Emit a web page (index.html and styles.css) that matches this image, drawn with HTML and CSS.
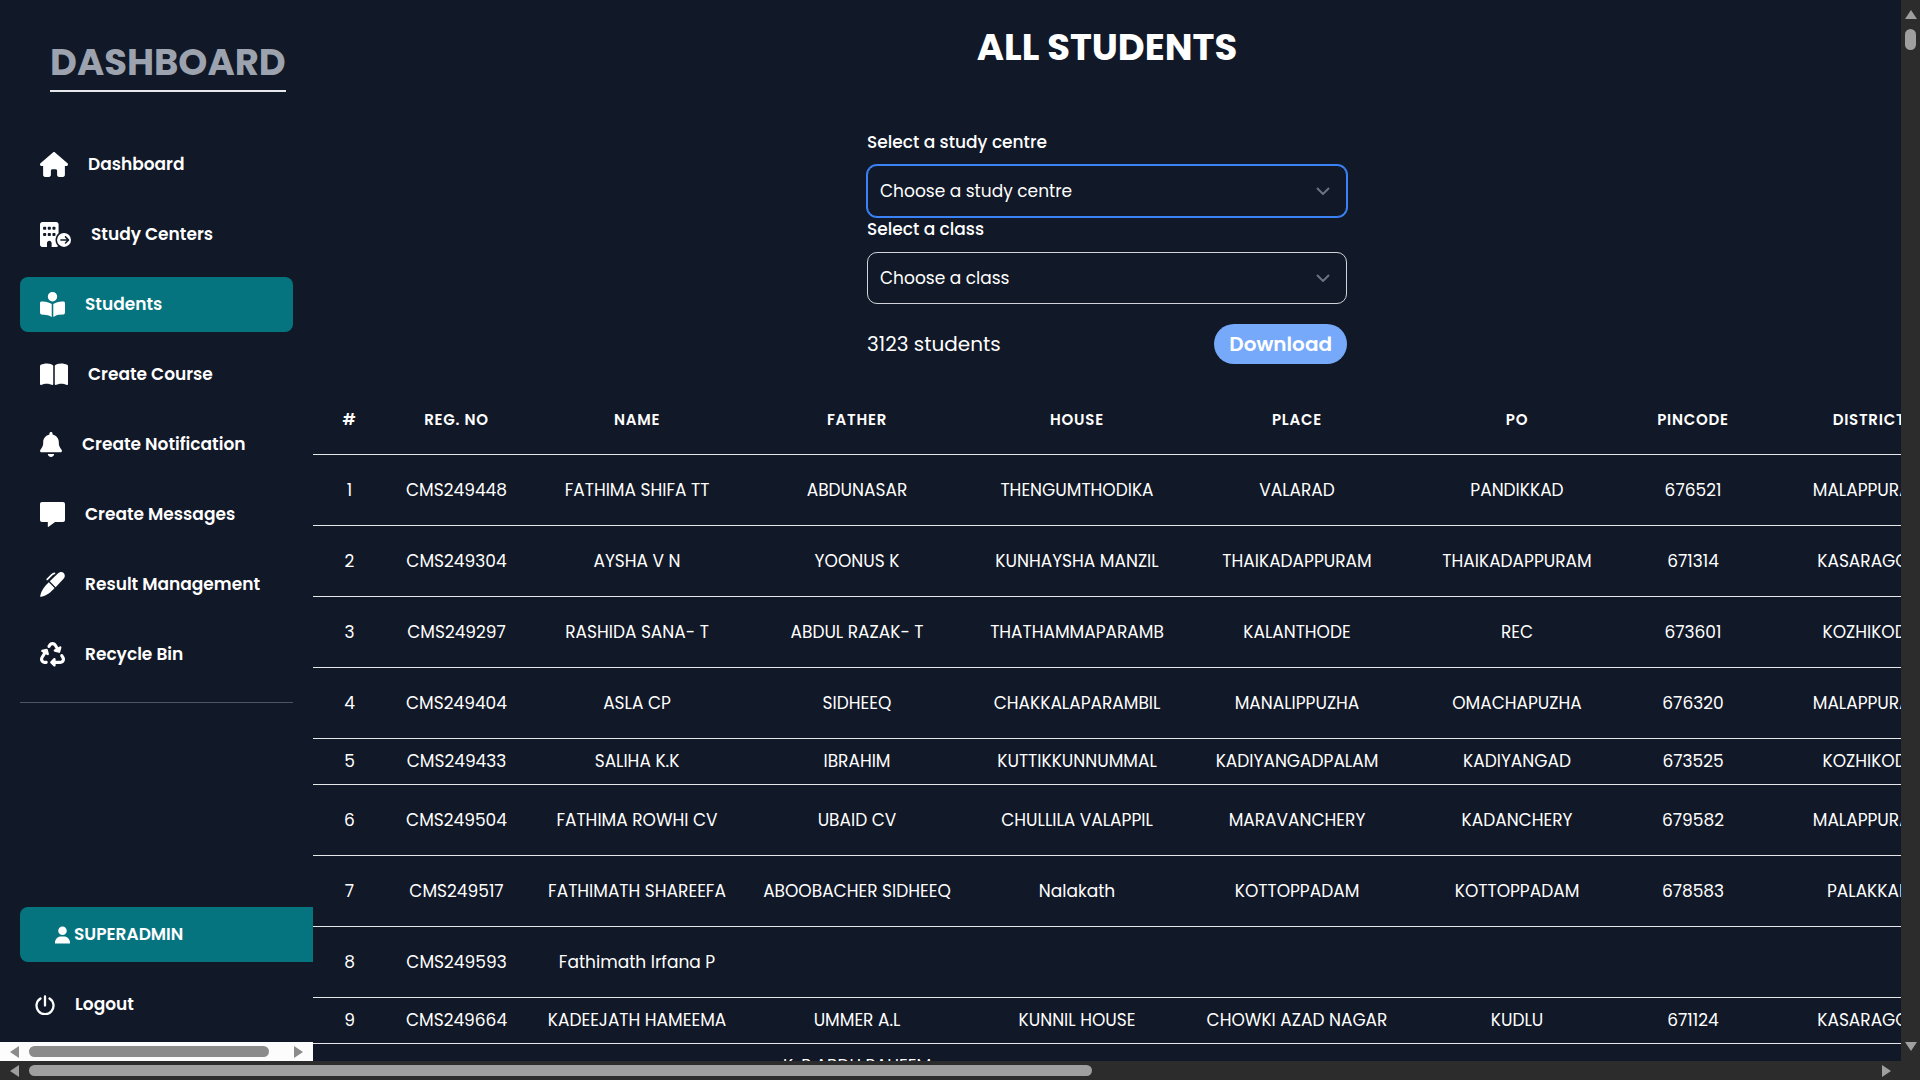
FILE: index.html
```
<!DOCTYPE html>
<html lang="en">
<head>
  <meta charset="UTF-8" />
  <meta name="viewport" content="width=device-width, initial-scale=1.0"/>
  <title>All Students</title>
  <link rel="stylesheet" href="styles.css">
</head>
<body>

  <div class="window">
    <div class="page">
      <aside class="sidebar">
        <div class="sidebar-body">
          <h2 class="brand">DASHBOARD</h2>
          <nav class="menu">
            <a href="#">
              <svg width="28" height="25" viewBox="0 0 576 512"><path d="M575.8 255.5c0 18-15 32.1-32 32.1h-32l.7 160.2c0 2.7-.2 5.4-.5 8.1V472c0 22.1-17.9 40-40 40H456c-1.1 0-2.2 0-3.3-.1c-1.4 .1-2.8 .1-4.2 .1H416 392c-22.1 0-40-17.9-40-40V448 384c0-17.7-14.3-32-32-32H256c-17.7 0-32 14.3-32 32v64 24c0 22.1-17.9 40-40 40H160 128.1c-1.5 0-3-.1-4.5-.2c-1.2 .1-2.4 .2-3.6 .2H104c-22.1 0-40-17.9-40-40V360c0-.9 0-1.9 .1-2.8V287.6H32c-18 0-32-14-32-32.1c0-9 3-17 10-24L266.4 8c7-7 15-8 22-8s15 2 21 7L564.8 231.5c8 7 12 15 11 24z"/></svg>
              Dashboard
            </a>
            <a href="#">
              <svg width="31" height="25" viewBox="0 0 640 512"><path fill-rule="evenodd" d="M48 0H336c26.5 0 48 21.5 48 48V232c-39 32-64 81-64 136c0 49 20 94 53 126C364 505 351 512 336 512H240V432c0-26.5-21.5-48-48-48s-48 21.5-48 48v80H48c-26.5 0-48-21.5-48-48V48C0 21.5 21.500 0 48 0zM80 224c-9 0-16 7-16 16v32c0 9 7 16 16 16h32c9 0 16-7 16-16V240c0-9-7-16-16-16H80zm96 0c-9 0-16 7-16 16v32c0 9 7 16 16 16h32c9 0 16-7 16-16V240c0-9-7-16-16-16H176zm96 0c-9 0-16 7-16 16v32c0 9 7 16 16 16h32c9 0 16-7 16-16V240c0-9-7-16-16-16H272zM80 96c-9 0-16 7-16 16v32c0 9 7 16 16 16h32c9 0 16-7 16-16V112c0-9-7-16-16-16H80zm96 0c-9 0-16 7-16 16v32c0 9 7 16 16 16h32c9 0 16-7 16-16V112c0-9-7-16-16-16H176zm96 0c-9 0-16 7-16 16v32c0 9 7 16 16 16h32c9 0 16-7 16-16V112c0-9-7-16-16-16H272zM496 224a144 144 0 1 1 0 288 144 144 0 1 1 0-288zM515 293c-6 6-6 16 0 23l36 36H432c-9 0-16 7-16 16s7 16 16 16H551l-36 36c-6 7-6 17 0 23s16 6 22 0l64-64c6-6 6-16 0-22l-64-64c-6-6-16-6-22 0z"/></svg>
              Study Centers
            </a>
            <a href="#" class="active">
              <svg width="25" height="25" viewBox="0 0 512 512"><path d="M160 96a96 96 0 1 1 192 0A96 96 0 1 1 160 96zm80 152V512l-48.4-24.2c-20.9-10.4-43.5-17-66.8-19.3l-96-9.6C12.5 457.2 0 443.5 0 427V224c0-17.7 14.3-32 32-32H62.3c63.6 0 125.6 19.6 177.7 56zm32 264V248c52.1-36.4 114.1-56 177.7-56H480c17.7 0 32 14.3 32 32V427c0 16.4-12.5 30.2-28.8 31.8l-96 9.6c-23.2 2.3-45.9 8.9-66.8 19.3L272 512z"/></svg>
              Students
            </a>
            <a href="#">
              <svg width="28" height="25" viewBox="0 0 576 512"><path d="M249.6 471.5c10.8 3.8 22.4-4.1 22.4-15.5V78.6c0-4.2-1.6-8.4-5-11C247.4 52 202.4 32 144 32C93.5 32 46.3 45.3 18.1 56.1C6.8 60.5 0 71.7 0 83.8V454.1c0 11.9 12.8 20.2 24.1 16.5C55.6 460.1 105.5 448 144 448c33.9 0 79 14 105.6 23.5zm76.8 0C353 462 398.1 448 432 448c38.5 0 88.4 12.1 119.9 22.6c11.3 3.8 24.1-4.6 24.1-16.5V83.8c0-12.1-6.8-23.3-18.1-27.6C529.7 45.3 482.5 32 432 32c-58.4 0-103.4 20-123 35.6c-3.3 2.6-5 6.8-5 11V456c0 11.4 11.7 19.3 22.4 15.5z"/></svg>
              Create Course
            </a>
            <a href="#">
              <svg width="22" height="25" viewBox="0 0 448 512"><path d="M224 0c-17.7 0-32 14.3-32 32V51.2C119 66 64 130.6 64 208v18.8c0 47-17.3 92.4-48.5 127.6l-7.4 8.3c-8.4 9.4-10.4 22.9-5.3 34.4S19.4 416 32 416H416c12.6 0 24-7.4 29.2-18.9s3.1-25-5.3-34.4l-7.4-8.3C401.3 319.2 384 273.9 384 226.8V208c0-77.4-55-142-128-156.8V32c0-17.7-14.3-32-32-32zm45.3 493.3c12-12 18.7-28.3 18.7-45.3H224 160c0 17 6.7 33.3 18.7 45.3s28.3 18.7 45.3 18.7s33.3-6.7 45.3-18.7z"/></svg>
              Create Notification
            </a>
            <a href="#">
              <svg width="25" height="25" viewBox="0 0 512 512"><path d="M40 0C18 0 0 18 0 40V368c0 22 18 40 40 40H160v92c0 10 8 15 16 9L309 408H472c22 0 40-18 40-40V40c0-22-18-40-40-40H40z"/></svg>
              Create Messages
            </a>
            <a href="#">
              <svg width="25" height="25" viewBox="0 0 512 512"><path d="M200 190L360 35c40-40 95-45 125-15s33 85-7 125L320 310zM180 212L298 330C230 410 140 485 25 508C8 512 0 505 4 487C25 385 95 295 180 212z"/><path class="clip" d="M148 150L235 62q25-25 60-32"/></svg>
              Result Management
            </a>
            <a href="#">
              <svg width="25" height="25" viewBox="0 0 512 512"><path d="M174.7 45.1C192.2 17 223 0 256 0s63.8 17 81.3 45.1l38.6 61.7 27-15.6c8.4-4.9 18.9-4.2 26.6 1.7s11.1 15.9 8.6 25.3l-23.4 87.4c-3.4 12.8-16.6 20.4-29.4 17l-87.4-23.4c-9.4-2.5-16.3-10.4-17.6-20s3.4-19.1 11.8-23.9l28.4-16.4L283 79c-5.8-9.3-16-15-27-15s-21.2 5.7-27 15l-17.5 28c-9.2 14.8-28.6 19.5-43.6 10.5c-15.3-9.2-20.2-29.2-10.7-44.4l17.5-28zM429.5 251.9c15-9 34.4-4.3 43.6 10.5l24.4 39.1c9.4 15.1 14.4 32.4 14.6 50.2c.3 53.1-42.7 96.4-95.8 96.4L320 448v32c0 9.7-5.8 18.5-14.8 22.2s-19.3 1.7-26.2-5.2l-64-64c-9.4-9.4-9.4-24.6 0-33.9l64-64c6.9-6.9 17.2-8.9 26.2-5.2s14.8 12.5 14.8 22.2v32l96.2 0c17.6 0 31.9-14.4 31.8-32c0-5.9-1.7-11.7-4.8-16.7l-24.4-39.1c-9.5-15.2-4.7-35.2 10.7-44.4zm-364.6-31L36 204.2c-8.4-4.9-13.1-14.3-11.8-23.9s8.2-17.5 17.6-20l87.4-23.4c12.8-3.4 26 4.2 29.4 17L182 241.2c2.5 9.4-.9 19.3-8.6 25.3s-18.2 6.6-26.6 1.7l-26.5-15.3L68.8 335.3c-3.1 5-4.8 10.8-4.8 16.7c-.1 17.6 14.2 32 31.8 32l32.2 0c17.7 0 32 14.3 32 32s-14.3 32-32 32l-32.2 0C42.7 448-.3 404.8 0 351.6c.1-17.8 5.1-35.1 14.6-50.2l50.3-80.5z"/></svg>
              Recycle Bin
            </a>
          </nav>
          <div class="account">
            <a href="#" class="user">
              <svg width="15" height="18" viewBox="0 0 448 512"><path d="M224 256A128 128 0 1 0 224 0a128 128 0 1 0 0 256zm-46 48C80 304 0 384 0 482V512H448V482C448 384 368 304 270 304H178z"/></svg>
              SUPERADMIN
            </a>
            <a href="#" class="logout">
              <svg class="power" width="20" height="20" viewBox="0 0 20 20"><path d="M5.5 3.5A8.500 8.500 0 1 0 14.5 3.5M10 1.500V10.500"/></svg>
              Logout
            </a>
          </div>
        </div>
        <div class="bar bar-light" aria-hidden="true">
          <svg width="9" height="12" viewBox="0 0 9 12"><path d="M9 0V12L0 6z"/></svg>
          <div class="track"><div class="thumb" style="width: 94%"></div></div>
          <svg width="9" height="12" viewBox="0 0 9 12"><path d="M0 0V12L9 6z"/></svg>
        </div>
      </aside>

      <main class="content">
        <h1>ALL STUDENTS</h1>
        <form class="filters">
          <label for="centre">Select a study centre</label>
          <div class="select-box focused">
            <select id="centre"><option>Choose a study centre</option></select>
            <svg width="14" height="8" viewBox="0 0 14 8"><path d="M1 1l6 6 6-6"/></svg>
          </div>
          <label for="class">Select a class</label>
          <div class="select-box">
            <select id="class"><option>Choose a class</option></select>
            <svg width="14" height="8" viewBox="0 0 14 8"><path d="M1 1l6 6 6-6"/></svg>
          </div>
          <div class="summary">
            <p>3123 students</p>
            <button type="button">Download</button>
          </div>
        </form>

        <div class="table-wrap">
          <table>
            <colgroup>
              <col class="c-num"><col class="c-reg"><col class="c-text"><col class="c-text"><col class="c-text">
              <col class="c-text"><col class="c-text"><col class="c-pin"><col class="c-text">
            </colgroup>
            <thead>
              <tr><th>#</th><th>REG. NO</th><th>NAME</th><th>FATHER</th><th>HOUSE</th><th>PLACE</th><th>PO</th><th>PINCODE</th><th>DISTRICT</th></tr>
            </thead>
            <tbody>
              <tr><td>1</td><td>CMS249448</td><td>FATHIMA SHIFA TT</td><td>ABDUNASAR</td><td>THENGUMTHODIKA</td><td>VALARAD</td><td>PANDIKKAD</td><td>676521</td><td>MALAPPURAM</td></tr>
              <tr><td>2</td><td>CMS249304</td><td>AYSHA V N</td><td>YOONUS K</td><td>KUNHAYSHA MANZIL</td><td>THAIKADAPPURAM</td><td>THAIKADAPPURAM</td><td>671314</td><td>KASARAGOD</td></tr>
              <tr><td>3</td><td>CMS249297</td><td>RASHIDA SANA- T</td><td>ABDUL RAZAK- T</td><td>THATHAMMAPARAMB</td><td>KALANTHODE</td><td>REC</td><td>673601</td><td>KOZHIKODE</td></tr>
              <tr><td>4</td><td>CMS249404</td><td>ASLA CP</td><td>SIDHEEQ</td><td>CHAKKALAPARAMBIL</td><td>MANALIPPUZHA</td><td>OMACHAPUZHA</td><td>676320</td><td>MALAPPURAM</td></tr>
              <tr class="short"><td>5</td><td>CMS249433</td><td>SALIHA K.K</td><td>IBRAHIM</td><td>KUTTIKKUNNUMMAL</td><td>KADIYANGADPALAM</td><td>KADIYANGAD</td><td>673525</td><td>KOZHIKODE</td></tr>
              <tr><td>6</td><td>CMS249504</td><td>FATHIMA ROWHI CV</td><td>UBAID CV</td><td>CHULLILA VALAPPIL</td><td>MARAVANCHERY</td><td>KADANCHERY</td><td>679582</td><td>MALAPPURAM</td></tr>
              <tr><td>7</td><td>CMS249517</td><td>FATHIMATH SHAREEFA</td><td>ABOOBACHER SIDHEEQ</td><td>Nalakath</td><td>KOTTOPPADAM</td><td>KOTTOPPADAM</td><td>678583</td><td>PALAKKAD</td></tr>
              <tr><td>8</td><td>CMS249593</td><td>Fathimath Irfana P</td><td></td><td></td><td></td><td></td><td></td><td></td></tr>
              <tr class="short"><td>9</td><td>CMS249664</td><td>KADEEJATH HAMEEMA</td><td>UMMER A.L</td><td>KUNNIL HOUSE</td><td>CHOWKI AZAD NAGAR</td><td>KUDLU</td><td>671124</td><td>KASARAGOD</td></tr>
              <tr><td></td><td></td><td></td><td>K. P ABDU RAHEEM<br>&nbsp;</td><td></td><td></td><td></td><td></td><td></td></tr>
            </tbody>
          </table>
        </div>
      </main>
    </div>

    <div class="bar bar-vertical" aria-hidden="true">
      <svg width="12" height="9" viewBox="0 0 12 9"><path d="M0 9H12L6 0z"/></svg>
      <div class="track"><div class="thumb"></div></div>
      <svg width="12" height="9" viewBox="0 0 12 9"><path d="M0 0H12L6 9z"/></svg>
    </div>
    <div class="bar" aria-hidden="true">
      <svg width="9" height="12" viewBox="0 0 9 12"><path d="M9 0V12L0 6z"/></svg>
      <div class="track"><div class="thumb" style="width: 57.7%"></div></div>
      <svg width="9" height="12" viewBox="0 0 9 12"><path d="M0 0V12L9 6z"/></svg>
    </div>
    <div class="corner"></div>
  </div>

</body>
</html>
```
FILE: styles.css
```
* {
  box-sizing: border-box;
}
body {
  margin: 0;
  font-family: Poppins, Inter, sans-serif;
  font-size: 17px;
  line-height: 25px;
  background-color: #111827;
  color: white;
}
a {
  color: inherit;
  text-decoration: none;
}
svg {
  display: block;
  flex: none;
  fill: currentColor;
}

/* window frame with its scroll bars */
.window {
  display: grid;
  grid-template-columns: minmax(0, 1fr) 19px;
  grid-template-rows: minmax(0, 1fr) 19px;
  height: 100vh;
}
.page {
  display: flex;
  overflow: hidden;
}
.bar {
  display: flex;
  align-items: center;
  gap: 10px;
  height: 19px;
  padding: 0 10px;
  background-color: #2c2c2c;
  color: #9f9f9f;
}
.track {
  flex: 1;
}
.thumb {
  height: 11px;
  border-radius: 6px;
  background-color: #9f9f9f;
}
.bar-light {
  background-color: #fcfcfc;
  color: #8b8b8b;
}
.bar-light .thumb {
  background-color: #8b8b8b;
}
.bar-vertical {
  flex-direction: column;
  width: 19px;
  height: auto;
  padding: 10px 0;
}
.bar-vertical .thumb {
  width: 11px;
  height: 21px;
}
.corner {
  background-color: #2c2c2c;
}

/* sidebar */
.sidebar {
  display: flex;
  flex-direction: column;
  flex: none;
  width: 313px;
}
.sidebar-body {
  flex: 1;
  display: flex;
  flex-direction: column;
  overflow: hidden;
  padding: 40px 0 10px 20px;
  font-weight: 600;
}
.brand {
  align-self: flex-start;
  margin: 0 0 45px 30px;
  padding-bottom: 5px;
  border-bottom: 2px solid #e5e7eb;
  font-size: 37px;
  line-height: 45px;
  font-weight: 700;
  color: #9ca3af;
}
.menu {
  display: flex;
  flex-direction: column;
  gap: 15px;
  margin-right: 20px;
  padding-bottom: 20px;
  border-bottom: 1px solid #4b5563;
}
.menu a,
.account a {
  display: flex;
  align-items: center;
  gap: 20px;
  height: 55px;
  padding: 0 20px;
  border-radius: 8px;
  white-space: nowrap;
}
.menu .active,
.account .user {
  background-color: #05747f;
}
.clip {
  fill: none;
  stroke: currentColor;
  stroke-width: 36;
  stroke-linecap: round;
}
.account {
  display: flex;
  flex-direction: column;
  gap: 15px;
  margin-top: auto;
}
.account .user {
  gap: 4px;
  padding-left: 35px;
  border-radius: 8px 0 0 8px;
}
.account .logout {
  padding-left: 15px;
}
.power {
  fill: none;
  stroke: currentColor;
  stroke-width: 2.3;
  stroke-linecap: round;
}

/* content */
.content {
  flex: 1;
  min-width: 0;
}
h1 {
  margin: 25px 0 60px;
  font-size: 37px;
  line-height: 45px;
  font-weight: 700;
  text-align: center;
}
.filters {
  width: 480px;
  margin: 0 auto 20px;
}
.filters label {
  display: block;
  margin-bottom: 10px;
  font-weight: 500;
}
.select-box {
  position: relative;
}
.select-box select {
  display: block;
  width: 100%;
  height: 52px;
  padding: 0 12px;
  appearance: none;
  border: 1px solid #d1d5db;
  border-radius: 10px;
  background-color: #111827;
  color: white;
  font: inherit;
}
.focused select {
  border-color: #3b82f6;
  box-shadow: 0 0 0 1px #3b82f6;
}
.select-box svg {
  position: absolute;
  right: 17px;
  top: 22px;
  fill: none;
  stroke: #6b7280;
  stroke-width: 2;
  pointer-events: none;
}
.summary {
  display: flex;
  align-items: center;
  justify-content: space-between;
  margin-top: 20px;
  font-size: 20px;
}
.summary p {
  margin: 0;
}
.summary button {
  height: 40px;
  padding: 0 15px;
  border: none;
  border-radius: 20px;
  background-color: #76a9fa;
  color: white;
  font: inherit;
  font-weight: 600;
}
.table-wrap {
  overflow: hidden;
}
table {
  width: 1666px;
  table-layout: fixed;
  border-collapse: separate;
  border-spacing: 0;
  text-align: center;
}
.c-num {
  width: 73px;
}
.c-reg {
  width: 141px;
}
.c-text {
  width: 220px;
}
.c-pin {
  width: 132px;
}
th,
td {
  height: 71px;
  padding: 0;
  border-bottom: 1px solid #e5e7eb;
  white-space: nowrap;
}
.short td {
  height: 46px;
}
th {
  font-size: 15px;
  font-weight: 600;
  letter-spacing: 0.05em;
}
```
